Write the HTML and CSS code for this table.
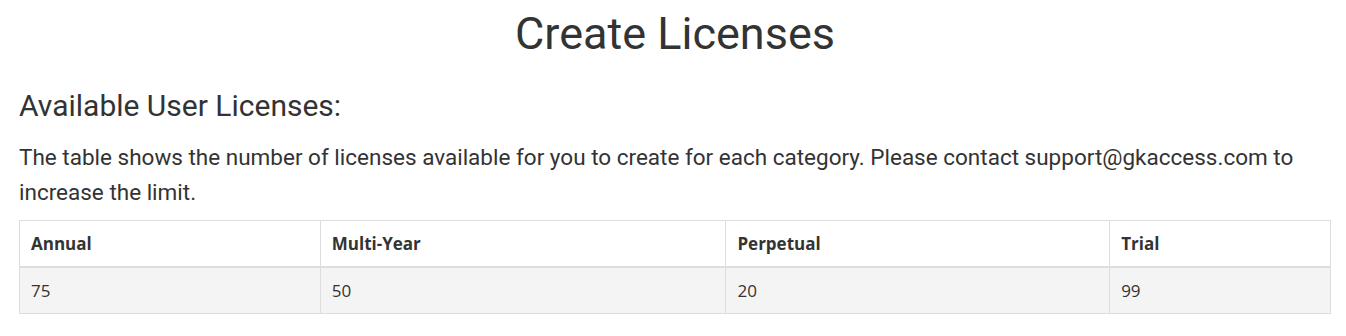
FILE: index.html
```html
<!DOCTYPE html>
<html lang="en">
<head>
<meta charset="utf-8">
<title>Create Licenses</title>
<link rel="stylesheet" href="styles.css">
</head>
<body>
<main class="page">
  <h1 class="page-title">Create Licenses</h1>
  <h2 class="section-title">Available User Licenses:</h2>
  <p class="intro">The table shows the number of licenses available for you to create for each category. Please contact support@gkaccess.com to increase the limit.</p>
  <table class="license-table">
    <colgroup>
      <col class="col-annual">
      <col class="col-multi">
      <col class="col-perpetual">
      <col class="col-trial">
    </colgroup>
    <thead>
      <tr>
        <th>Annual</th>
        <th>Multi-Year</th>
        <th>Perpetual</th>
        <th>Trial</th>
      </tr>
    </thead>
    <tbody>
      <tr>
        <td>75</td>
        <td>50</td>
        <td>20</td>
        <td>99</td>
      </tr>
    </tbody>
  </table>
</main>
</body>
</html>
```

FILE: styles.css
```css
* { box-sizing: border-box; }

html, body {
  margin: 0;
  padding: 0;
  background: #fff;
}

body {
  font-family: Roboto, "Liberation Sans", sans-serif;
  color: #333;
}

.page {
  padding: 8px 15px 0 19px;
}

.page-title {
  margin: 0;
  font-size: 45px;
  line-height: 52px;
  font-weight: 400;
  text-align: center;
  color: #333;
}

.section-title {
  margin: 28px 0 0;
  font-size: 30px;
  line-height: 36px;
  font-weight: 400;
  color: #333;
}

.intro {
  margin: 16px 0 0;
  font-size: 22.5px;
  line-height: 35px;
  color: #333;
}

.license-table {
  margin-top: 10px;
  width: 100%;
  border-collapse: collapse;
  font-family: "Open Sans", "Liberation Sans", sans-serif;
  font-size: 17px;
  line-height: 23px;
  color: #333;
}

.col-annual { width: 301px; }
.col-multi { width: 406px; }
.col-perpetual { width: 384px; }
.col-trial { width: 221px; }

.license-table th,
.license-table td {
  text-align: left;
  padding: 11px 11px;
  border: 1px solid #ddd;
  vertical-align: middle;
}

.license-table th {
  font-weight: 700;
  border-bottom: 2px solid #ddd;
}

.license-table tbody tr {
  background: #f4f4f4;
}
```
